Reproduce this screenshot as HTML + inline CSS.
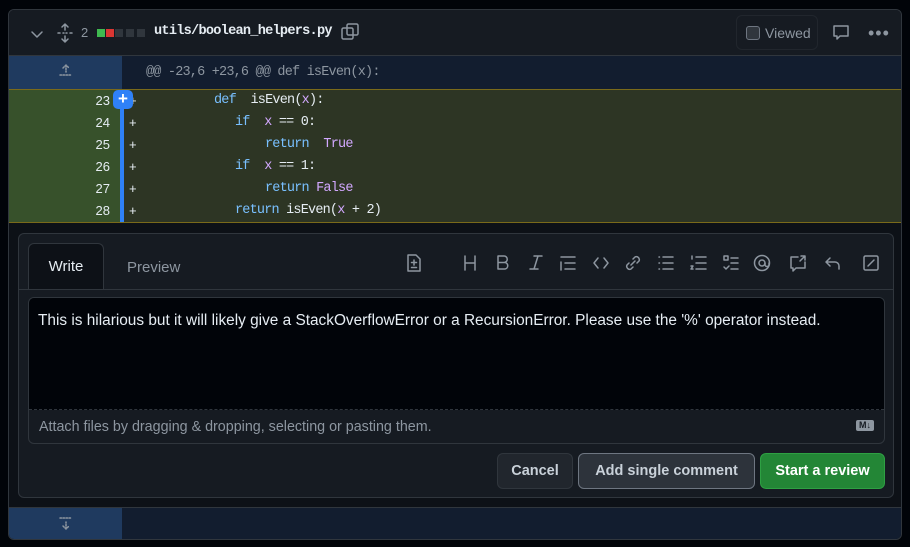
<!DOCTYPE html>
<html><head><style>
*{box-sizing:border-box;margin:0;padding:0}
body{width:910px;height:547px;background:#010409;font-family:"Liberation Sans",sans-serif;position:relative;overflow:hidden;color:#e6edf3}
.card{position:absolute;left:8px;top:9px;width:894px;height:531px;background:#0d1117;border:1px solid #30363d;border-radius:6px;overflow:hidden}
.hdr{position:absolute;left:0;top:0;width:100%;height:46px;background:#161b22;border-bottom:1px solid #30363d}
.mono{font-family:"Liberation Mono",monospace;letter-spacing:-0.8px}
.abs{position:absolute}
.hunk{position:absolute;top:46px;height:33px;left:0;width:100%;background:#121d2f}
.hunk .g{position:absolute;left:0;top:0;width:113px;height:33px;background:#1f3a5f}
.lines{position:absolute;top:79px;left:0;width:100%;height:134px;background:#2d3524;border-top:1px solid #7a6a1a;border-bottom:1px solid #7a6a1a}
.gut{position:absolute;left:0;top:0;width:113px;height:132px;background:#37512b}
.ln{position:absolute;left:0;width:113px;height:22px;text-align:right;padding-right:12px;font-size:13px;line-height:22px;color:#e6edf3}
.pl{position:absolute;left:120px;font-size:13px;line-height:22px;color:#e6edf3}
.code{position:absolute;height:22px;font-size:13.5px;line-height:22px;white-space:pre;color:#e6edf3}
.k{color:#79c0ff}.v{color:#d2a8ff}
.ic{stroke:#8d96a0;fill:none;stroke-width:1.5;stroke-linecap:round;stroke-linejoin:round}
.btn{position:absolute;top:443px;height:36px;border-radius:6px;font-size:14.5px;font-weight:bold;line-height:34px;text-align:center}
</style></head><body>
<div class="card">
 <div class="hdr">
  <svg class="abs" style="left:20px;top:16px" width="16" height="16"><path class="ic" d="M3 6l5 5 5-5"/></svg>
  <svg class="abs" style="left:48px;top:13px" width="16" height="20"><path class="ic" d="M8 1v6M5 4l3-3 3 3M8 13v6M5 16l3 3 3-3M1 10h2M6 10h1M9 10h1M13 10h2"/></svg>
  <span class="abs" style="left:72px;top:15px;font-size:13px;color:#8d96a0">2</span>
  <div class="abs" style="left:88px;top:19px;width:8px;height:8px;background:#3fb950"></div>
  <div class="abs" style="left:97px;top:19px;width:8px;height:8px;background:#da3633"></div>
  <div class="abs" style="left:106px;top:19px;width:8px;height:8px;background:#30363d"></div>
  <div class="abs" style="left:117px;top:19px;width:8px;height:8px;background:#30363d"></div>
  <div class="abs" style="left:128px;top:19px;width:8px;height:8px;background:#30363d"></div>
  <span class="abs mono" style="left:145px;top:14px;font-size:13.6px;color:#e6edf3;font-weight:bold;letter-spacing:-0.75px">utils/boolean_helpers.py</span>
  <svg class="abs" style="left:332px;top:13px" width="18" height="18"><rect class="ic" x="1" y="5" width="11" height="11" rx="1.5"/><rect class="ic" x="6" y="1" width="11" height="11" rx="1.5"/></svg>
  <div class="abs" style="left:727px;top:5px;width:82px;height:35px;border:1px solid #21262d;border-radius:6px"></div>
  <div class="abs" style="left:737px;top:16px;width:14px;height:14px;border:1px solid #6e7681;border-radius:3px;background:#30363d"></div>
  <span class="abs" style="left:756px;top:15px;font-size:14px;color:#8d96a0">Viewed</span>
  <svg class="abs" style="left:823px;top:14px" width="18" height="18"><path class="ic" d="M2 2h14v10H8l-3 3v-3H2z"/></svg>
  <div class="abs" style="left:859px;top:21px;font-size:18px;color:#8d96a0;letter-spacing:1px;line-height:4px">•••</div>
 </div>
 <div class="hunk"><div class="g"><svg class="abs" style="left:49px;top:7px" width="16" height="16"><path class="ic" d="M8 2v7M5 5l3-3 3 3M2 12h12" stroke-dasharray="1.5 1.5"/></svg></div>
  <span class="abs mono" style="left:137px;top:9px;font-size:13.5px;color:#8d96a0">@@ -23,6 +23,6 @@ def isEven(x):</span></div>
 <div class="lines">
  <div class="gut"></div>
  <div class="abs" style="left:111px;top:0;width:4px;height:132px;background:#2f81f7"></div>
  <div class="ln" style="top:0">23</div><div class="ln" style="top:22px">24</div><div class="ln" style="top:44px">25</div><div class="ln" style="top:66px">26</div><div class="ln" style="top:88px">27</div><div class="ln" style="top:110px">28</div>
  <div class="pl" style="top:0">+</div><div class="pl" style="top:22px">+</div><div class="pl" style="top:44px">+</div><div class="pl" style="top:66px">+</div><div class="pl" style="top:88px">+</div><div class="pl" style="top:110px">+</div>
  <div class="abs" style="left:104px;top:0;width:20px;height:19px;background:#2f81f7;border-radius:5px;color:#fff;font-size:17px;line-height:17px;text-align:center;font-weight:bold">+</div>
  <div class="code mono" style="top:0;left:205px"><span class="k">def</span>  isEven(<span class="v">x</span>):</div>
  <div class="code mono" style="top:22px;left:226px"><span class="k">if</span>  <span class="v">x</span> == 0:</div>
  <div class="code mono" style="top:44px;left:256px"><span class="k">return</span>  <span class="v">True</span></div>
  <div class="code mono" style="top:66px;left:226px"><span class="k">if</span>  <span class="v">x</span> == 1:</div>
  <div class="code mono" style="top:88px;left:256px"><span class="k">return</span> <span class="v">False</span></div>
  <div class="code mono" style="top:110px;left:226px"><span class="k">return</span> isEven(<span class="v">x</span> + 2)</div>
 </div>
 <div class="abs" style="left:9px;top:223px;width:876px;height:265px;background:#161b22;border:1px solid #30363d;border-radius:6px">
  <div class="abs" style="left:9px;top:9px;width:76px;height:46px;background:#0d1117;border:1px solid #30363d;border-bottom:none;border-radius:6px 6px 0 0;font-size:15px;text-align:center;line-height:46px;color:#e6edf3">Write</div>
  <span class="abs" style="left:108px;top:25px;font-size:15px;color:#8d96a0">Preview</span>
  <svg class="abs" style="left:384px;top:19px;" width="480" height="20">
   <g class="ic">
   <g transform="translate(3,1)"><path d="M2 1h8l4 4v12H2zM8 6v5M5.5 8.5h5M5.5 13.5h5"/></g>
   <g transform="translate(59,2)"><path d="M3 1v14M13 1v14M3 8h10"/></g>
   <g transform="translate(92,2)"><path d="M3 1h6a3.2 3.2 0 010 6.5H3zM3 7.5h7a3.3 3.3 0 010 6.5H3zM3 1v13"/></g>
   <g transform="translate(125,2)"><path d="M6 1h8M2 14h8M10 1L6 14"/></g>
   <g transform="translate(157,2)"><path d="M1 2h14M5 8h10M5 14h10M1 7v8"/></g>
   <g transform="translate(190,2)"><path d="M5 3L1 8l4 5M11 3l4 5-4 5"/></g>
   <g transform="translate(222,2)"><path d="M8 4l2-2a3 3 0 014 4l-2 2M8 12l-2 2a3 3 0 01-4-4l2-2M6 10l4-4"/></g>
   <g transform="translate(255,2)"><path d="M5 2h10M5 8h10M5 14h10M1 2h.5M1 8h.5M1 14h.5"/></g>
   <g transform="translate(287,2)"><path d="M6 2h10M6 8h10M6 14h10M2 1v3M1 11h2l-2 3h2"/></g>
   <g transform="translate(320,2)"><path d="M1 1h4v4H1zM8 3h7M8 8h7M8 14h7M1 12l2 2 3-3"/></g>
   <g transform="translate(351,1)"><circle cx="8" cy="9" r="7.5"/><circle cx="8" cy="9" r="3"/><path d="M11 9v1.5a2 2 0 004 0V9"/></g>
   <g transform="translate(387,2)"><path d="M15 7v6H6l-3 3v-3H1V2h7M11 1h4v4M15 1l-5 5"/></g>
   <g transform="translate(422,2)"><path d="M5 3L1 7l4 4M1 7h9a4 4 0 014 4v3"/></g>
   <g transform="translate(460,2)"><rect x="1" y="1" width="14" height="14" rx="1.5"/><path d="M5 11l6-6"/></g>
   </g>
  </svg>
  <div class="abs" style="left:0;top:55px;width:874px;border-top:1px solid #30363d"></div>
  <div class="abs" style="left:9px;top:63px;width:857px;height:147px;border:1px solid #30363d;border-radius:6px;background:#161b22;overflow:hidden">
   <div class="abs" style="left:0;top:0;width:100%;height:112px;background:#010409;border-bottom:1px dashed #30363d"></div>
   <div class="abs" style="left:9px;top:14px;font-size:15.4px;color:#e6edf3;white-space:nowrap">This is hilarious but it will likely give a StackOverflowError or a RecursionError. Please use the '%' operator instead.</div>
   <div class="abs" style="left:10px;top:121px;font-size:14.3px;color:#8d96a0">Attach files by dragging &amp; dropping, selecting or pasting them.</div>
   <div class="abs" style="left:827px;top:122px;width:18px;height:11px;background:#8d96a0;border-radius:2px;color:#161b22;font-size:9px;font-weight:bold;line-height:11px;text-align:center">M↓</div>
  </div>
 </div>
 <div class="btn" style="left:488px;width:76px;background:#21262d;border:1px solid #30363d;color:#c9d1d9">Cancel</div>
 <div class="btn" style="left:569px;width:177px;background:#2d333b;border:1px solid #6e7681;color:#c9d1d9">Add single comment</div>
 <div class="btn" style="left:751px;width:125px;background:#238636;border:1px solid #2ea043;color:#fff">Start a review</div>
 <div class="abs" style="left:0;top:497px;width:100%;height:34px;background:#121d2f;border-top:1px solid #30363d"></div>
 <div class="abs" style="left:0;top:498px;width:113px;height:33px;background:#1f3a5f"><svg class="abs" style="left:49px;top:7px" width="16" height="16"><path class="ic" d="M8 14V7M5 11l3 3 3-3M2 3h12" stroke-dasharray="1.5 1.5"/></svg></div>
</div>
</body></html>
